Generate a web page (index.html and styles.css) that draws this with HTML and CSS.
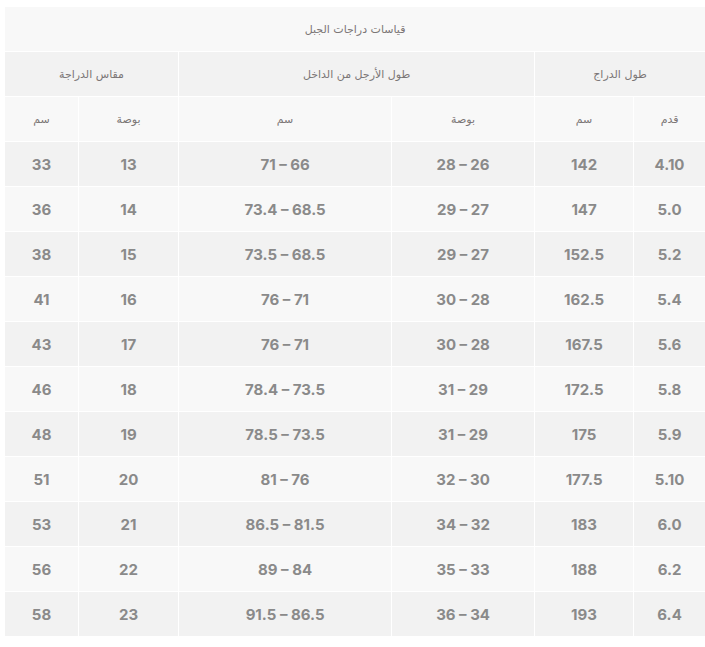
FILE: index.html
```html
<!DOCTYPE html>
<html lang="ar">
<head>
<meta charset="utf-8">
<link rel="stylesheet" href="styles.css">
</head>
<body>
<div class="wrap">
<table class="sizes" dir="rtl">
  <colgroup>
    <col class="c1"><col class="c2"><col class="c3"><col class="c4"><col class="c5"><col class="c6">
  </colgroup>
  <thead>
    <tr class="title"><th colspan="6">قياسات دراجات الجبل</th></tr>
    <tr class="group"><th colspan="2">طول الدراج</th><th colspan="2">طول الأرجل من الداخل</th><th colspan="2">مقاس الدراجة</th></tr>
    <tr class="sub"><th>قدم</th><th>سم</th><th>بوصة</th><th>سم</th><th>بوصة</th><th>سم</th></tr>
  </thead>
  <tbody>
    <tr><td>4.10</td><td>142</td><td>28 – 26</td><td>71 – 66</td><td>13</td><td>33</td></tr>
    <tr><td>5.0</td><td>147</td><td>29 – 27</td><td>73.4 – 68.5</td><td>14</td><td>36</td></tr>
    <tr><td>5.2</td><td>152.5</td><td>29 – 27</td><td>73.5 – 68.5</td><td>15</td><td>38</td></tr>
    <tr><td>5.4</td><td>162.5</td><td>30 – 28</td><td>76 – 71</td><td>16</td><td>41</td></tr>
    <tr><td>5.6</td><td>167.5</td><td>30 – 28</td><td>76 – 71</td><td>17</td><td>43</td></tr>
    <tr><td>5.8</td><td>172.5</td><td>31 – 29</td><td>78.4 – 73.5</td><td>18</td><td>46</td></tr>
    <tr><td>5.9</td><td>175</td><td>31 – 29</td><td>78.5 – 73.5</td><td>19</td><td>48</td></tr>
    <tr><td>5.10</td><td>177.5</td><td>32 – 30</td><td>81 – 76</td><td>20</td><td>51</td></tr>
    <tr><td>6.0</td><td>183</td><td>34 – 32</td><td>86.5 – 81.5</td><td>21</td><td>53</td></tr>
    <tr><td>6.2</td><td>188</td><td>35 – 33</td><td>89 – 84</td><td>22</td><td>56</td></tr>
    <tr><td>6.4</td><td>193</td><td>36 – 34</td><td>91.5 – 86.5</td><td>23</td><td>58</td></tr>
  </tbody>
</table>
</div>
</body>
</html>
```

FILE: styles.css
```css
html, body {
  margin: 0;
  padding: 0;
  background: #ffffff;
  overflow: hidden;
}
.wrap {
  padding: 6px 0 0 4px;
  width: 701px;
  overflow: hidden;
}
.sizes {
  table-layout: fixed;
  border-collapse: separate;
  border-spacing: 1px;
  width: 702px;
  background: #ffffff;
}
.c1 { width: 71px; }
.c2 { width: 98px; }
.c3 { width: 142px; }
.c4 { width: 212px; }
.c5 { width: 99px; }
.c6 { width: 73px; }
.sizes th,
.sizes td {
  height: 44px;
  padding: 0;
  text-align: center;
  vertical-align: middle;
  box-sizing: border-box;
}
.sizes th {
  font-family: "DejaVu Sans", "Liberation Sans", sans-serif;
  font-weight: normal;
  font-size: 11px;
  color: #7b7676;
}
.title th { background: #f8f8f8; }
.group th { background: #f2f2f2; }
.sub th { background: #f8f8f8; }
.sizes td {
  font-family: Inter, "Liberation Sans", sans-serif;
  font-weight: 700;
  font-size: 15px;
  color: #8a8a8a;
  direction: ltr;
}
.sizes tbody tr:nth-child(odd) td { background: #f2f2f2; }
.sizes tbody tr:nth-child(even) td { background: #f8f8f8; }
```
